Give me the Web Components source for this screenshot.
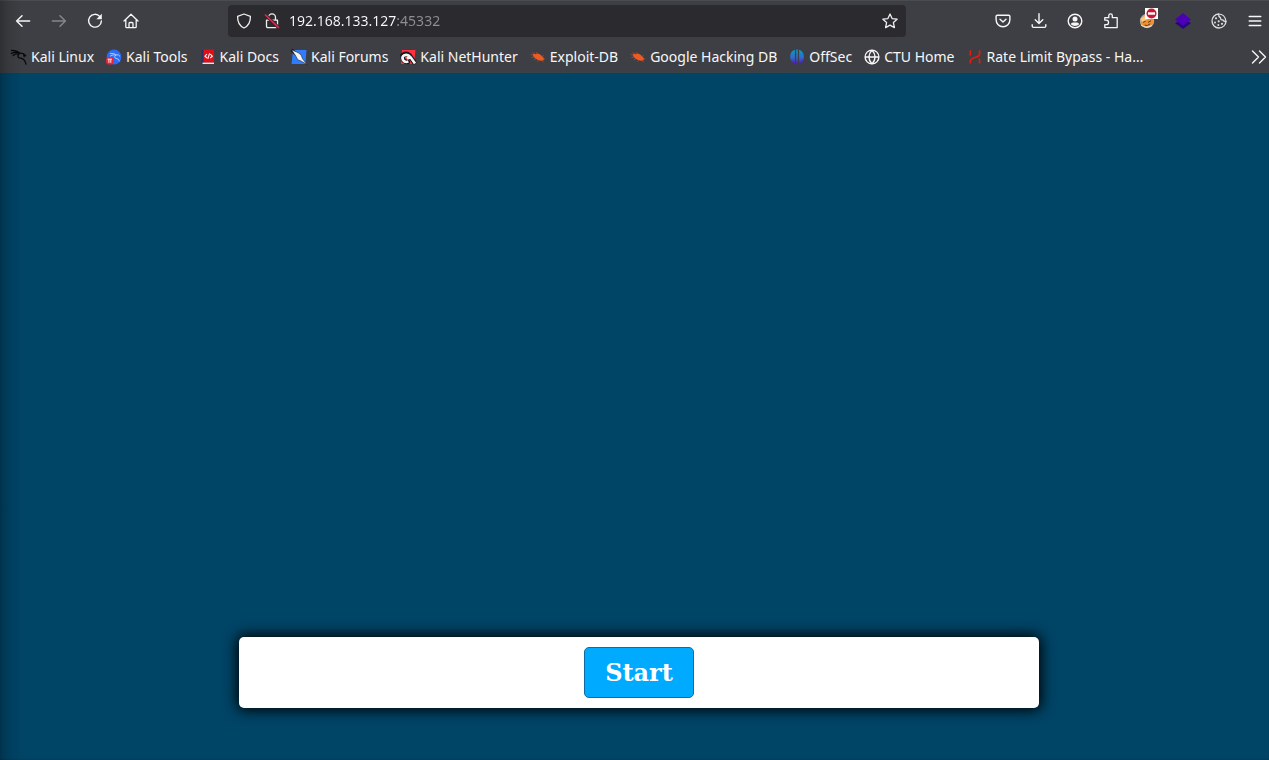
<!DOCTYPE html>
<html lang="en">
<head>
<meta charset="utf-8">
<title>192.168.133.127:45332</title>
<style>
body { margin: 0; font-family: "Noto Sans", "Open Sans", sans-serif; font-size: 14px; }
</style>
</head>
<body>
<browser-window>
  <tool-bar slot="chrome">
    <tool-button slot="start" icon="back" label="Back"></tool-button>
    <tool-button slot="start" icon="forward" label="Forward" dim></tool-button>
    <tool-button slot="start" icon="reload" label="Reload"></tool-button>
    <tool-button slot="start" icon="home" label="Home"></tool-button>
    <address-bar value="192.168.133.127:45332"></address-bar>
    <tool-button slot="end" icon="pocket" label="Save to Pocket"></tool-button>
    <tool-button slot="end" icon="download" label="Downloads"></tool-button>
    <tool-button slot="end" icon="account" label="Account"></tool-button>
    <tool-button slot="end" icon="puzzle" label="Extensions"></tool-button>
    <tool-button slot="end" icon="proxy" label="Proxy"></tool-button>
    <tool-button slot="end" icon="layers" label="Wappalyzer"></tool-button>
    <tool-button slot="end" icon="cookie" label="Cookies"></tool-button>
    <tool-button slot="end" icon="menu" label="Menu"></tool-button>
  </tool-bar>
  <bookmark-bar slot="chrome">
    <bookmark-link icon="kali">Kali Linux</bookmark-link>
    <bookmark-link icon="tools">Kali Tools</bookmark-link>
    <bookmark-link icon="docs">Kali Docs</bookmark-link>
    <bookmark-link icon="forums">Kali Forums</bookmark-link>
    <bookmark-link icon="hunter">Kali NetHunter</bookmark-link>
    <bookmark-link icon="bug">Exploit-DB</bookmark-link>
    <bookmark-link icon="bug">Google Hacking DB</bookmark-link>
    <bookmark-link icon="offsec">OffSec</bookmark-link>
    <bookmark-link icon="globe">CTU Home</bookmark-link>
    <bookmark-link icon="rate">Rate Limit Bypass - Ha…</bookmark-link>
  </bookmark-bar>
  <start-panel>Start</start-panel>
</browser-window>

<script>
const line = (d, w = 1.4) => `<path d="${d}" fill="none" stroke="currentColor" stroke-width="${w}" stroke-linecap="round" stroke-linejoin="round"/>`;
const bug = `<path fill="#ee5a24" d="m2.6 5.6 1.8-.9 1.4.6 1.4-.9 2 .5 1.7 1 1.2 1.5 1.5 1.3.4 1.6-1 1.3-2 .1-2.8-.6-2.6-1.3-1.8-1.8z"/><path stroke="#c9502a" stroke-width=".6" fill="none" d="M5 5 2.6 3.6M7.5 5 6 3M12 7.4l1.8-.8M13 9.6l2.4.5M4 8l-2.6.5M6 9.6 3.8 11M8.6 11l-1 1.6M12 11l1.6 2.2M2.8 6 .6 5.4"/>`;
const icons = {
  back: line('M14.6 8H1.8M7 2.8 1.6 8 7 13.2', 1.5),
  forward: line('M1.4 8h12.8M9 2.8 14.4 8 9 13.2', 1.5),
  reload: line('M12.9 3.6A6.4 6.4 0 1 0 14.4 8') + '<path fill="currentColor" d="M14.8.8v5.4H9.4z"/>',
  home: line('M1 8 8 1.3 15 8M2.8 6.6v7.2q0 .9.9.9h8.6q.9 0 .9-.9V6.6M6 14.5v-4q0-1 1-1h2q1 0 1 1v4', 1.3),
  shield: line('M8 1 14.4 3.3C14.6 8.8 13 12.7 8 15 3 12.7 1.4 8.8 1.6 3.3z', 1.3),
  lock: line('M4.5 7V4.4a3.5 3.5 0 0 1 7 0V7M2.5 7.2h11v6q0 1.4-1.4 1.4H3.9q-1.4 0-1.4-1.4z', 1.3) + '<path d="M1 1.5 15 15" stroke="#2b2b2f" stroke-width="3.2"/><path d="M1 1.5 15 15" stroke="#e8244c" stroke-width="1.7"/>',
  star: line('m8 1 2.1 4.6 5 .6-3.7 3.4 1 5L8 12.1l-4.4 2.5 1-5L.9 6.2l5-.6z', 1.3),
  pocket: line('M2.3 2.2h11.4q1.2 0 1.2 1.2v3.4a6.9 6.9 0 0 1-13.8 0V3.4q0-1.2 1.2-1.2zM5 6.2l3 2.9 3-2.9', 1.4),
  download: line('M8 .8v9.6M4.2 6.8 8 10.6l3.8-3.8M1.2 11.7v1.4q0 1.3 1.3 1.3h11q1.3 0 1.3-1.3v-1.4'),
  account: '<circle cx="8" cy="8" r="6.8" fill="none" stroke="currentColor" stroke-width="1.4"/><circle cx="8" cy="6" r="2.5" fill="currentColor"/><path fill="currentColor" d="M3.8 11.2Q4.2 9.4 6 9.4h4q1.8 0 2.2 1.8Q10.6 13 8 13t-4.2-1.8z"/>',
  puzzle: line('M1.8 7.2V4.7h4V2.6a1.7 1.7 0 0 1 3.5 0v2.1h4.9v9.9H1.8v-2.9h1.5a2.2 2.2 0 0 0 0-4.5z', 1.3),
  proxy: '<circle cx="8" cy="8" r="7.2" fill="#b0afac"/><ellipse cx="8" cy="8.4" rx="6.4" ry="5.4" fill="#ef9132"/><path fill="#ffc77c" d="m1.2 6 4.5-3L9 6 3.5 9z"/><path d="M4 9.4 6.6 8.2M9 9.4l3-1.6M5.6 12.2q3 1.2 5.6-1.4" stroke="#5a3b20" fill="none"/><path d="M2 12q5 4 11 .5" stroke="#f5ead7" fill="none"/><path fill="#fff" d="M6-5h13V6H6z"/><circle cx="12.5" cy=".5" r="5" fill="#c81832"/><path fill="#fff" d="M9-.7h7v2.4H9z"/>',
  layers: '<path fill="#26067b" d="m0 10 8-4 8 4-8 6z"/><path fill="#4c00b5" d="m8 0 8 6.5-8 6.5-8-6.5z"/>',
  cookie: '<g opacity=".85">' + line('M7.6 1A7 7 0 1 0 15 8.4q-2.2.4-3-1.4-2.6.2-2.6-2.4Q7.4 3.6 7.6 1z', 1.3) + line('M7.6 1Q14 1 15 8.4', 1.1) + '<g fill="currentColor"><circle cx="5" cy="5.3" r="1.1"/><circle cx="7.7" cy="8.3" r="1.1"/><circle cx="4" cy="9.5" r="1"/><circle cx="7.3" cy="12" r="1"/><circle cx="11" cy="10.8" r="1.1"/></g></g>',
  menu: line('M2.2 3.5h11.6M2.2 8h11.6M2.2 12.5h11.6', 1.4),
  kali: '<path fill="none" stroke="#08080a" stroke-width="1.3" stroke-linecap="round" stroke-linejoin="round" d="M.6 1.4Q6 1.6 9 4.2M.4 4.4Q3 3 6.4 3.4M2 6.6Q4 4.4 8 4.6M8.6 4.2Q5.4 7.4 8.2 8.8 13.8 9 15 15.2M8.6 4.2Q12.6 3.6 14.8 6.8M12.6 5.6l.6 2"/>',
  tools: '<circle cx="8" cy="8" r="7.4" fill="#2d6df4"/><path fill="none" stroke="#a6caff" stroke-width="1" d="M4 4.6q4-1 6 1.2 3-.4 4 1.6M4 7.2q3-2 6-1.2-2.6 2-.6 3.2 3.4.2 4.2 3.2"/><circle cx="3.8" cy="11.7" r="3.9" fill="#ea2338"/><path d="M1.6 10.2h4.4M2.9 10.2v3.6M4.8 10.2v3.6" stroke="#fff" stroke-width=".9"/>',
  docs: '<path fill="#263263" d="M1.5 1h3v13h-3z"/><path fill="#e20d18" d="M3.5.6H14v13H3.5z"/><path fill="#e8e8e8" d="M2.5 13.6H14V15H2.5z"/><path fill="none" stroke="#fff" stroke-width="1.1" d="M7 5 5 7.2l2 1.8M10.3 5l2 2.2-2 1.8M9.6 4.4 7.8 9.8"/>',
  forums: '<path fill="#2e7cff" d="M2 1h13.5L14.4 15H.6z"/><path fill="none" stroke="#16202e" stroke-width="3.4" d="M.4.8 6 6"/><path fill="#f4f4f2" stroke="#16202e" stroke-width=".6" d="M.6.8 7 3.6l3 2.2 1.6 4L16 15.6l-5.6-3.4-3.6-1.4L5 7.4z"/>',
  hunter: '<path fill="#ff2f3e" d="M2 1h13.5l-1 9.5L12 15H1z"/><path fill="none" stroke="#16171c" stroke-width="4.8" stroke-linecap="round" d="M2.6 6.4Q6 3.4 9.6 6.6L14 13"/><path fill="none" stroke="#16171c" stroke-width="4.4" stroke-linecap="round" d="M2.6 8.4Q3 13.4 8 13"/><path fill="none" stroke="#f5f5f5" stroke-width="2.6" d="M15 14.4 10.6 8.2Q8 5 4.4 6.2 1.4 7.8 3 11q1.8 2.8 5.4 1.6M10.4 8 6.8 9.4"/>',
  bug,
  offsec: '<defs><linearGradient id="g" x2="0" y2="1"><stop stop-color="#079bc7"/><stop offset=".55" stop-color="#3369c8"/><stop offset="1" stop-color="#5b08cc"/></linearGradient></defs><path fill="url(#g)" d="M5.9.8v13.7A7.3 7.3 0 0 1 5.9.8zm4.2 0v13.7a7.3 7.3 0 0 0 0-13.7zM7.2.5h1.6v15H7.2z"/>',
  globe: line('M8 1.1a6.9 6.9 0 1 0 0 13.8A6.9 6.9 0 0 0 8 1.1zM8 1.1Q1.8 8 8 14.9M8 1.1Q14.2 8 8 14.9M1.2 8h13.6', 1.4),
  rate: '<path fill="none" stroke="#e21c10" stroke-width="1.6" d="M3.4 1.2v3q0 1.5-.9 2.3M3.4 14.6v-2.8q.2-1.8 2.6-2.6l4-1.4q2.6-.8 2.6-3V1.2M12.6 14.6v-3q0-1.4-.9-2"/>',
  more: line('m1.5 2 6 6-6 6M8.5 2l6 6-6 6', 1.4)
};
const svg = (name, size = 16) => `<svg width="${size}" height="${size}" viewBox="0 0 16 16" overflow="visible" aria-hidden="true">${icons[name]}</svg>`;
const define = (name, render) => customElements.define(name, class extends HTMLElement {
  constructor() {
    super();
    this.attachShadow({ mode: 'open' });
  }
  connectedCallback() {
    this.shadowRoot.innerHTML = render(this);
  }
});

define('browser-window', () => `
  <style>
    :host { display: flex; flex-direction: column; min-height: 100vh; position: relative; background: #004466; }
    header { background: #3e3f44; border-bottom: 1px solid #37424a; color: #f7f7f8; box-shadow: inset 0 1px #4b4c50; }
    main { flex: 1; display: flex; box-shadow: inset 0 -1px 2px -1px #00334d; }
    /* shade cast along the left edge of the window */
    :host::after { content: ""; position: absolute; inset: 0 auto 0 0; width: 22px; background: linear-gradient(90deg, #00000040, #00000018 40%, #0000); pointer-events: none; }
  </style>
  <header><slot name="chrome"></slot></header>
  <main><slot></slot></main>`);

define('tool-bar', () => `
  <style>
    :host { display: flex; align-items: center; height: 42px; padding-left: 9px; }
    nav { display: flex; gap: 8px; }
    .address { flex: 1; min-width: 0; margin: 0 83px; }
  </style>
  <nav aria-label="Navigation"><slot name="start"></slot></nav>
  <div class="address"><slot></slot></div>
  <nav aria-label="Tools"><slot name="end"></slot></nav>`);

define('tool-button', el => `
  <style>
    :host { display: block; }
    :host([dim]) { color: #85868a; }
    button { display: flex; align-items: center; justify-content: center; width: 28px; height: 32px; padding: 0; border: 0; background: none; color: inherit; }
    svg { display: block; }
  </style>
  <button type="button" aria-label="${el.getAttribute('label')}">${svg(el.getAttribute('icon'))}</button>`);

define('address-bar', el => `
  <style>
    :host { display: flex; align-items: center; height: 32px; padding: 0 8px; border-radius: 4px; background: #2b2b2f; box-sizing: border-box; color: #eeeeef; }
    svg { display: block; flex: none; }
    .lock { margin: 0 9px 0 12px; }
    button { display: block; padding: 0; border: 0; background: none; color: inherit; }
    input { flex: 1; min-width: 0; padding: 0; border: 0; outline: 0; font: inherit; line-height: 20px; color: #fbfbfe;
      -webkit-text-fill-color: transparent; background: linear-gradient(90deg, #fbfbfe 107px, #8f8f93 107px) text; }
  </style>
  ${svg('shield')}<span class="lock">${svg('lock')}</span>
  <input type="text" aria-label="Address" value="${el.getAttribute('value')}">
  <button type="button" aria-label="Bookmark this page">${svg('star')}</button>`);

define('bookmark-bar', () => `
  <style>
    :host { display: flex; align-items: center; height: 30px; padding: 0 2px 0 11px; }
    nav { flex: 1; display: flex; gap: 12px; min-width: 0; }
    button { padding: 0; border: 0; background: none; color: inherit; }
    svg { display: block; }
  </style>
  <nav aria-label="Bookmarks"><slot></slot></nav>
  <button type="button" aria-label="More bookmarks">${svg('more')}</button>`);

define('bookmark-link', el => `
  <style>
    :host { display: block; flex: none; }
    a { display: flex; align-items: center; gap: 4px; line-height: 20px; color: inherit; text-decoration: none; white-space: nowrap; }
    svg { display: block; }
  </style>
  <a href="#">${svg(el.getAttribute('icon'))}<span><slot></slot></span></a>`);

define('start-panel', () => `
  <style>
    :host { flex: 1; display: flex; align-items: flex-end; justify-content: center; padding: 16px 0 52px 9px; }
    section { display: flex; justify-content: center; box-sizing: border-box; width: 100%; max-width: 800px; padding: 10px; border-radius: 5px; background: #fff; box-shadow: 0 0 14px 2px #000; }
    button { padding: 10px 20px; border: 1px solid #0d6da3; border-radius: 5px; background: #00aaff; color: #fff; font: bold 24px/29px "DejaVu Serif", serif; }
  </style>
  <section><button type="button"><slot></slot></button></section>`);
</script>
</body>
</html>
